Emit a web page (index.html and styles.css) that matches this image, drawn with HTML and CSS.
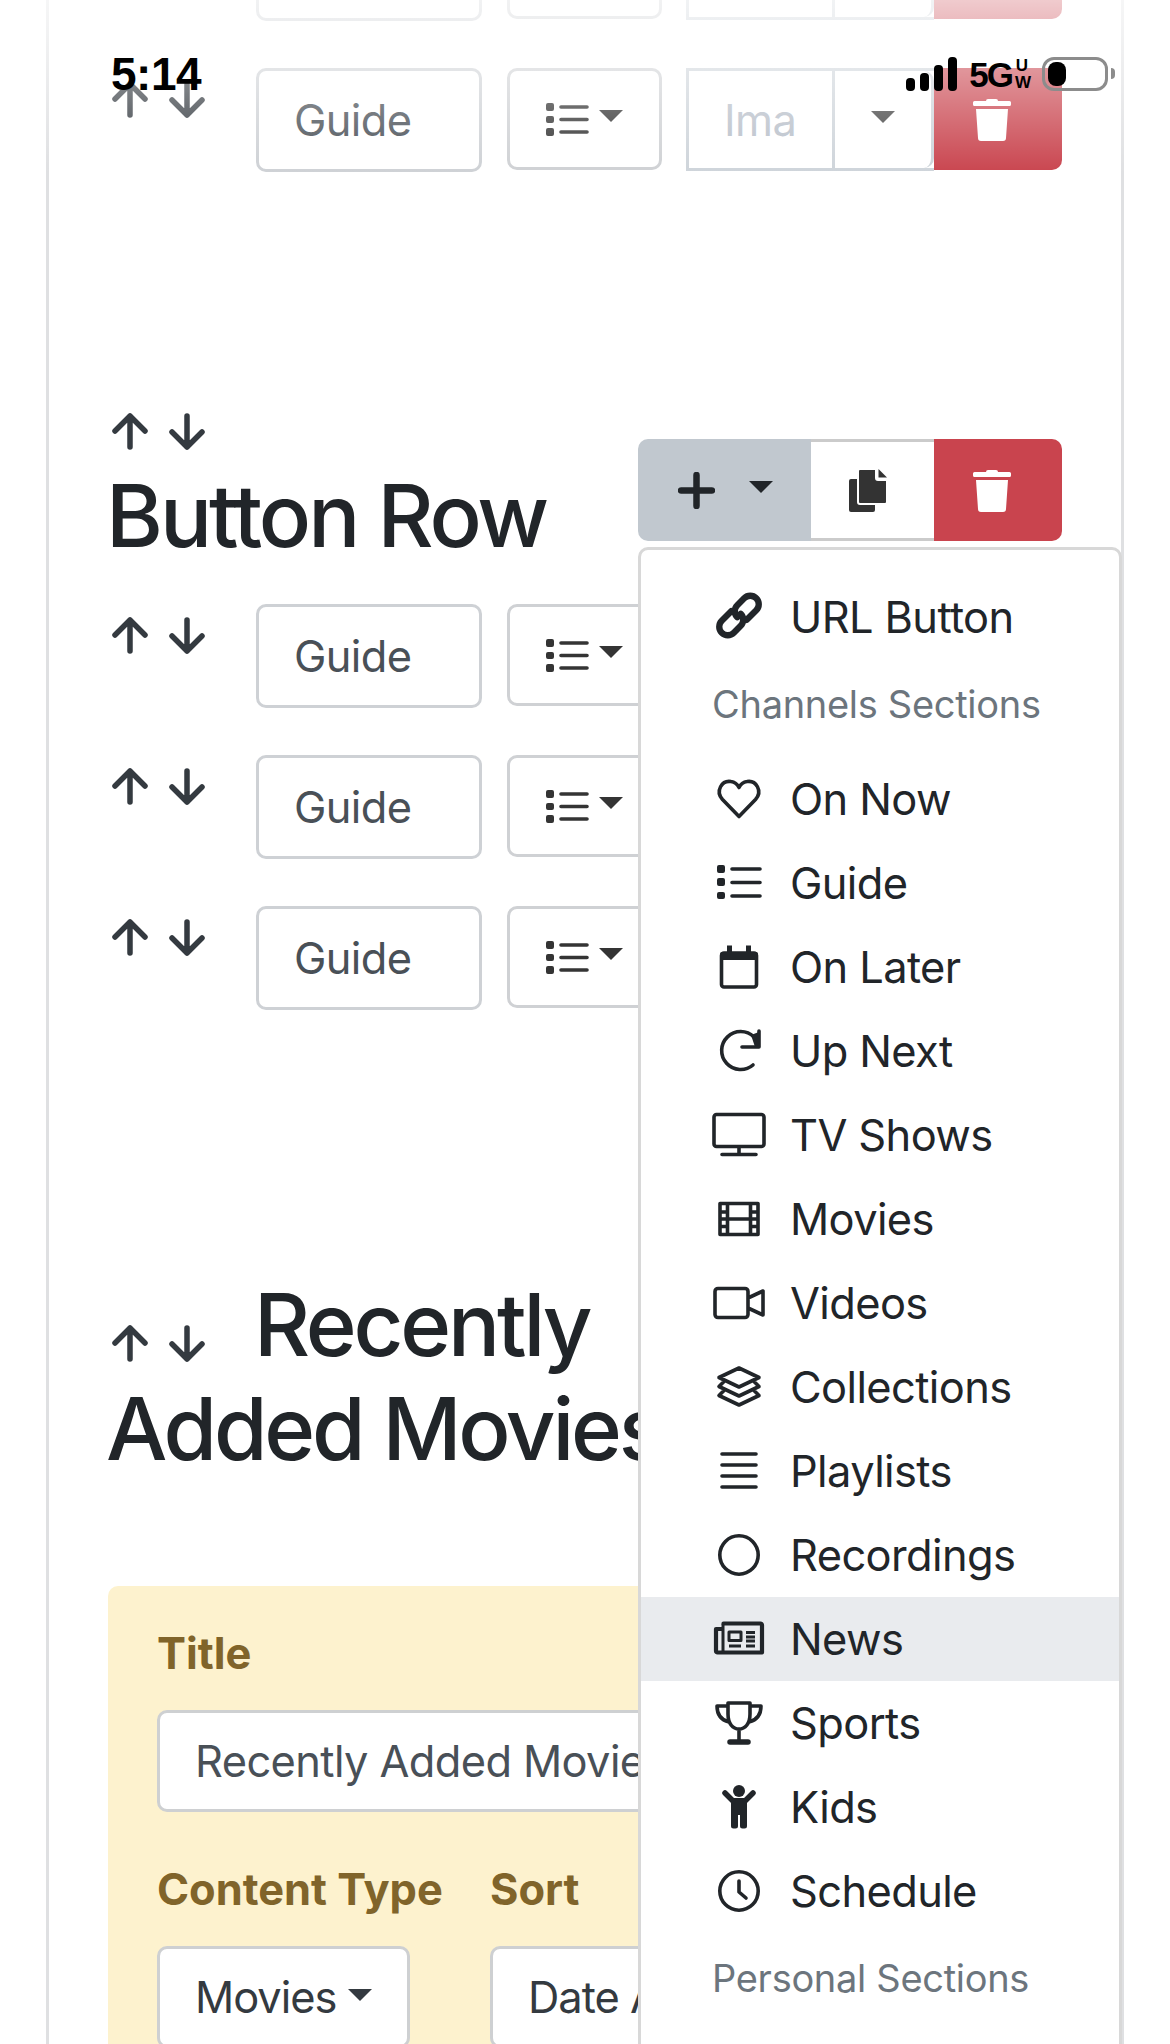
FILE: index.html
```html
<!DOCTYPE html>
<html lang="en">
<head>
    <meta charset="UTF-8">
    <meta name="viewport" content="width=device-width, initial-scale=1.0">
    <title>Sections</title>
    <link rel="stylesheet" href="styles.css">
</head>
<body>

<svg class="sprite" aria-hidden="true">
    <symbol id="i-up" viewBox="0 0 36 37"><path d="M18 34V3M3 18 18 3l15 15"/></symbol>
    <symbol id="i-down" viewBox="0 0 36 37"><path d="M18 3v31M3 19l15 15 15-15"/></symbol>
    <symbol id="i-trash" viewBox="0 0 38 43">
        <path class="solid" d="M13 3a2 2 0 0 1 2-2h8a2 2 0 0 1 2 2zM1.500 3h35A1.500 1.500 0 0 1 38 4.500v2A1.500 1.500 0 0 1 36.500 8h-35A1.500 1.500 0 0 1 0 6.500v-2A1.500 1.500 0 0 1 1.500 3zM3 11h32l-2 29a3 3 0 0 1-3 3H8a3 3 0 0 1-3-3z"/>
    </symbol>
    <symbol id="i-lines" viewBox="0 0 43 33">
        <path class="solid" d="M2 0h4a2 2 0 0 1 2 2v4a2 2 0 0 1-2 2H2a2 2 0 0 1-2-2V2a2 2 0 0 1 2-2zm0 13h4a2 2 0 0 1 2 2v3a2 2 0 0 1-2 2H2a2 2 0 0 1-2-2v-3a2 2 0 0 1 2-2zm0 12h4a2 2 0 0 1 2 2v4a2 2 0 0 1-2 2H2a2 2 0 0 1-2-2v-4a2 2 0 0 1 2-2z"/>
        <path class="thin" d="M15 4h26M15 16.500h26M15 29h26"/>
    </symbol>
    <symbol id="i-link" viewBox="0 0 54 54">
        <g transform="translate(27 25.500) rotate(-45) scale(1.22)">
            <path class="link" d="M-2-7h-11a7 7 0 0 0 0 14h8a7 7 0 0 0 7-7M2 7h11a7 7 0 0 0 0-14H5a7 7 0 0 0-7 7"/>
        </g>
    </symbol>
    <symbol id="i-heart" viewBox="0 0 54 54"><path d="M27 44.500 10.500 27.500C3 19 10 8 19 9.500c4 .5 6.500 3 8 6 1.500-3 4-5.500 8-6 9-1.500 16 9.500 8.500 18z"/></symbol>
    <symbol id="i-guide" viewBox="0 0 54 54">
        <path class="solid" d="M7 9h4a2 2 0 0 1 2 2v4a2 2 0 0 1-2 2H7a2 2 0 0 1-2-2v-4a2 2 0 0 1 2-2zm0 13h4a2 2 0 0 1 2 2v4a2 2 0 0 1-2 2H7a2 2 0 0 1-2-2v-4a2 2 0 0 1 2-2zm0 14h4a2 2 0 0 1 2 2v3a2 2 0 0 1-2 2H7a2 2 0 0 1-2-2v-3a2 2 0 0 1 2-2z"/>
        <path d="M20 13h28M20 26.500h28M20 40h28"/>
    </symbol>
    <symbol id="i-calendar" viewBox="0 0 54 54">
        <path d="M12 13h30a2.500 2.500 0 0 1 2.500 2.500v29A2.500 2.500 0 0 1 42 47H12a2.500 2.500 0 0 1-2.500-2.500v-29A2.500 2.500 0 0 1 12 13z"/>
        <path class="solid" d="M15 5.500h5V12h14V5.500h5V12h5a2 2 0 0 1 2 2v6H8v-6a2 2 0 0 1 2-2h5z"/>
    </symbol>
    <symbol id="i-redo" viewBox="0 0 54 54">
        <path d="M42 13A19 19 0 1 0 41 41M47 7v16H30"/>
        <path class="solid" d="M39 11l8-3v15h-4z"/>
    </symbol>
    <symbol id="i-tv" viewBox="0 0 54 54">
        <path d="M4.500 6.500h45a2.500 2.500 0 0 1 2.500 2.500v27a2.500 2.500 0 0 1-2.500 2.500h-45A2.500 2.500 0 0 1 2 36V9a2.500 2.500 0 0 1 2.500-2.500zM27 39v7M10 46.500h34"/>
    </symbol>
    <symbol id="i-film" viewBox="0 0 54 54">
        <path d="M8 11.500h38v31H8zM15.500 11.500v31M38.500 11.500v31M15.500 27h23M8 20h7.500M8 27h7.500M8 34.500h7.500M38.500 20H46M38.500 27H46M38.500 34.500H46"/>
    </symbol>
    <symbol id="i-video" viewBox="0 0 54 54">
        <path d="M6 12.500h27a3 3 0 0 1 3 3v23a3 3 0 0 1-3 3H6a3 3 0 0 1-3-3v-23a3 3 0 0 1 3-3zM36 22l15-7v24l-15-7z"/>
    </symbol>
    <symbol id="i-layers" viewBox="0 0 54 54">
        <path d="M27 8l20 9.500L27 27 7 17.500zM12 21.500l-5 5L27 36l20-9.500-5-5M12 30.500l-5 5L27 45l20-9.500-5-5"/>
    </symbol>
    <symbol id="i-rows" viewBox="0 0 54 54"><path class="thin" d="M10 10h34M10 21h34M10 32h34M10 43h34"/></symbol>
    <symbol id="i-circle" viewBox="0 0 54 54"><circle cx="27" cy="27" r="19.200"/></symbol>
    <symbol id="i-news" viewBox="0 0 54 54">
        <path class="bold" d="M11.500 11.500h37a1.500 1.500 0 0 1 1.500 1.500v27.500H5.500a1.500 1.500 0 0 1-1.500-1.500V17h6"/>
        <path class="mid" d="M11 12v28M17 20h12v8.500H17zM34 20.500h9M34 25h9M34 29h9M17 34h12M34 34h9"/>
    </symbol>
    <symbol id="i-trophy" viewBox="0 0 54 54">
        <path d="M16 7h22v11c0 10-5 15-11 15s-11-5-11-15zM16 10H5c0 9 4 14 12 16M38 10h11c0 9-4 14-12 16M27 33v12"/>
        <path class="thick" d="M18 46h18"/>
    </symbol>
    <symbol id="i-kid" viewBox="0 0 54 54">
        <circle class="solid" cx="27" cy="11" r="6"/>
        <path class="solid" d="M21 18h12a2 2 0 0 1 2 2v26a2.500 2.500 0 0 1-2.500 2.500h-2A2.500 2.500 0 0 1 28 46V35h-2v11a2.500 2.500 0 0 1-2.500 2.500h-2A2.500 2.500 0 0 1 19 46V20a2 2 0 0 1 2-2z"/>
        <path class="thick" d="M13 13l8 8M41 13l-8 8"/>
    </symbol>
    <symbol id="i-clock" viewBox="0 0 54 54"><circle cx="27" cy="27" r="19.200"/><path d="M27 17v11l7 6"/></symbol>
</svg>

<div class="page">

    <!-- scrolled almost out of view, only the bottom edges show -->
    <div class="row">
        <div class="arrows"></div>
        <div class="guide-btn"></div>
        <div class="list-btn"></div>
        <div class="image-field"><span class="image-text"></span><span class="image-caret"></span></div>
        <div class="trash-btn"></div>
    </div>

    <div class="row">
        <div class="arrows"><svg class="arrow"><use href="#i-up"/></svg><svg class="arrow"><use href="#i-down"/></svg></div>
        <div class="guide-btn">Guide</div>
        <div class="list-btn"><svg class="list-icon"><use href="#i-lines"/></svg><span class="caret"></span></div>
        <div class="image-field"><span class="image-text">Ima</span><span class="image-caret"><span class="caret"></span></span></div>
        <div class="trash-btn"><svg class="trash-icon"><use href="#i-trash"/></svg></div>
    </div>

    <div class="section-head">
        <div class="section-title">
            <div class="arrows title-arrows"><svg class="arrow"><use href="#i-up"/></svg><svg class="arrow"><use href="#i-down"/></svg></div>
            <h2>Button Row</h2>
        </div>
        <div class="add-group">
            <div class="add-btn">
                <svg class="plus-icon" viewBox="0 0 37 37"><path d="M18.500 3v31M3 18.500h31"/></svg>
                <span class="caret"></span>
            </div>
            <div class="copy-btn">
                <svg class="copy-icon" viewBox="0 0 38 43">
                    <path d="M2 10h24v31a2 2 0 0 1-2 2H2a2 2 0 0 1-2-2V12a2 2 0 0 1 2-2z" fill="#333"/>
                    <path d="M11 0h16v9a2 2 0 0 0 2 2h9v22a2 2 0 0 1-2 2H11a2 2 0 0 1-2-2V2a2 2 0 0 1 2-2z" fill="#333" stroke="#fff" stroke-width="2"/>
                    <path d="M29.500 0 38 8.500h-8.500z" fill="#333"/>
                </svg>
            </div>
            <div class="trash-btn"><svg class="trash-icon"><use href="#i-trash"/></svg></div>

            <div class="menu">
                <div class="menu-item"><svg class="menu-icon"><use href="#i-link"/></svg>URL Button</div>
                <div class="menu-header">Channels Sections</div>
                <div class="menu-item"><svg class="menu-icon"><use href="#i-heart"/></svg>On Now</div>
                <div class="menu-item"><svg class="menu-icon"><use href="#i-guide"/></svg>Guide</div>
                <div class="menu-item"><svg class="menu-icon"><use href="#i-calendar"/></svg>On Later</div>
                <div class="menu-item"><svg class="menu-icon"><use href="#i-redo"/></svg>Up Next</div>
                <div class="menu-item"><svg class="menu-icon"><use href="#i-tv"/></svg>TV Shows</div>
                <div class="menu-item"><svg class="menu-icon"><use href="#i-film"/></svg>Movies</div>
                <div class="menu-item"><svg class="menu-icon"><use href="#i-video"/></svg>Videos</div>
                <div class="menu-item"><svg class="menu-icon"><use href="#i-layers"/></svg>Collections</div>
                <div class="menu-item"><svg class="menu-icon"><use href="#i-rows"/></svg>Playlists</div>
                <div class="menu-item"><svg class="menu-icon"><use href="#i-circle"/></svg>Recordings</div>
                <div class="menu-item active"><svg class="menu-icon"><use href="#i-news"/></svg>News</div>
                <div class="menu-item"><svg class="menu-icon"><use href="#i-trophy"/></svg>Sports</div>
                <div class="menu-item"><svg class="menu-icon"><use href="#i-kid"/></svg>Kids</div>
                <div class="menu-item"><svg class="menu-icon"><use href="#i-clock"/></svg>Schedule</div>
                <div class="menu-header">Personal Sections</div>
            </div>
        </div>
    </div>

    <div class="row">
        <div class="arrows"><svg class="arrow"><use href="#i-up"/></svg><svg class="arrow"><use href="#i-down"/></svg></div>
        <div class="guide-btn">Guide</div>
        <div class="list-btn"><svg class="list-icon"><use href="#i-lines"/></svg><span class="caret"></span></div>
    </div>

    <div class="row">
        <div class="arrows"><svg class="arrow"><use href="#i-up"/></svg><svg class="arrow"><use href="#i-down"/></svg></div>
        <div class="guide-btn">Guide</div>
        <div class="list-btn"><svg class="list-icon"><use href="#i-lines"/></svg><span class="caret"></span></div>
    </div>

    <div class="row">
        <div class="arrows"><svg class="arrow"><use href="#i-up"/></svg><svg class="arrow"><use href="#i-down"/></svg></div>
        <div class="guide-btn">Guide</div>
        <div class="list-btn"><svg class="list-icon"><use href="#i-lines"/></svg><span class="caret"></span></div>
    </div>

    <h2 class="wrap-title"><span class="arrows inline-arrows"><svg class="arrow"><use href="#i-up"/></svg><svg class="arrow"><use href="#i-down"/></svg></span>Recently<br>Added Movies</h2>

    <div class="panel">
        <label class="panel-label">Title</label>
        <div class="panel-input">Recently Added Movies</div>
        <div class="panel-cols">
            <div class="panel-col">
                <label class="panel-label">Content Type</label>
                <div class="select-btn">Movies<span class="caret"></span></div>
            </div>
            <div class="panel-col sort-col">
                <label class="panel-label">Sort</label>
                <div class="select-btn">Date Added<span class="caret"></span></div>
            </div>
        </div>
    </div>

</div>

<!-- phone status bar, over the page -->
<div class="status-fade"></div>
<div class="status-bar">
    <span class="status-time">5:14</span>
    <div class="status-right">
        <div class="signal"><span class="bar-1"></span><span class="bar-2"></span><span class="bar-3"></span><span class="bar-4"></span></div>
        <span class="net">5G</span>
        <span class="net-small">U<br>W</span>
        <div class="battery"><span class="battery-level"></span></div>
        <span class="battery-cap"></span>
    </div>
</div>

</body>
</html>
```

FILE: styles.css
```css
html, body {
    margin: 0;
    height: 2044px;
    overflow: hidden;
    background: #fff;
}

body {
    position: relative;
    font-family: Inter, "Noto Sans", sans-serif;
    font-size: 43.4px;
    line-height: 65px;
    color: #212529;
}

.sprite {
    position: absolute;
    width: 0;
    height: 0;
}

/* icon strokes, inherited into the <use> copies */
.sprite path, .sprite circle {
    fill: none;
    stroke: currentColor;
    stroke-width: 3.6;
    stroke-linecap: round;
    stroke-linejoin: round;
}

.sprite .solid {
    fill: currentColor;
    stroke: none;
}

.sprite .thin {
    stroke-width: 3.6;
}

.sprite .mid {
    stroke-width: 3;
    stroke-linecap: butt;
}

.sprite .bold {
    stroke-width: 4.2;
}

.sprite .thick {
    stroke-width: 5.5;
}

.sprite .link {
    stroke-width: 5.2;
}

.page {
    margin: -83px 46px 0;
    padding: 0 59px;
    min-height: 2300px;
    border-left: 3px solid #dfe0e2;
    border-right: 3px solid #dfe0e2;
}

.row {
    display: flex;
    height: 103px;
    margin-bottom: 48px;
}

.arrows {
    display: flex;
    gap: 21px;
    width: 148px;
    padding: 13px 0 0 4px;
    box-sizing: border-box;
    flex-shrink: 0;
}

.arrow {
    width: 36px;
    height: 37px;
    color: #343a40;
}

.sprite #i-up path, .sprite #i-down path {
    stroke-width: 5.5;
}

.guide-btn {
    width: 226px;
    height: 104px;
    box-sizing: border-box;
    padding-left: 35px;
    border: 3px solid #ced1d5;
    border-radius: 10px;
    line-height: 99px;
    color: #495057;
    letter-spacing: -0.6px;
    flex-shrink: 0;
}

.list-btn {
    display: flex;
    align-items: center;
    width: 155px;
    height: 102px;
    box-sizing: border-box;
    margin-left: 25px;
    padding-left: 36px;
    border: 3px solid #cfd1d4;
    border-radius: 10px;
    color: #343434;
    flex-shrink: 0;
}

.list-icon {
    width: 43px;
    height: 33px;
    margin-right: 10px;
}

.caret {
    display: inline-block;
    width: 0;
    height: 0;
    border-top: 12px solid currentColor;
    border-left: 12px solid transparent;
    border-right: 12px solid transparent;
    margin-top: -6px;
}

.image-field {
    display: flex;
    width: 248px;
    height: 103px;
    box-sizing: border-box;
    margin-left: 24px;
    border: 3px solid #ced4da;
    border-right: none;
    flex-shrink: 0;
}

.image-text {
    width: 146px;
    box-sizing: border-box;
    padding-left: 35px;
    line-height: 98px;
    color: #b9c0ca;
    letter-spacing: -0.6px;
    border-right: 3px solid #ced4da;
}

.image-caret {
    display: flex;
    align-items: center;
    justify-content: center;
    flex: 1;
    color: #444;
    border-right: 3px solid #ced4da;
    border-radius: 0 10px 10px 0;
}

.trash-btn {
    display: flex;
    align-items: center;
    justify-content: center;
    width: 128px;
    height: 102px;
    padding-right: 13px;
    box-sizing: border-box;
    background: #c9444e;
    border-radius: 0 10px 10px 0;
    flex-shrink: 0;
}

.trash-icon {
    width: 38px;
    height: 43px;
    color: #fff;
}

.section-head {
    display: flex;
    justify-content: space-between;
    margin: 242px 0 37px;
}

.title-arrows {
    padding-top: 0;
    margin-bottom: 14px;
}

h2 {
    margin: 0 0 0 -2px;
    font-size: 86.7px;
    line-height: 104px;
    font-weight: 500;
    letter-spacing: -3px;
}

.section-title h2 {
    margin-bottom: -1px;
}

.add-group {
    position: relative;
    display: flex;
    align-self: flex-start;
    width: 424px;
    margin-top: 26px;
}

.add-btn {
    display: flex;
    align-items: center;
    width: 173px;
    height: 102px;
    box-sizing: border-box;
    padding-left: 40px;
    background: #c1c8cf;
    border-radius: 10px 0 0 10px;
}

.plus-icon {
    width: 37px;
    height: 37px;
    margin-right: 34px;
}

.plus-icon path {
    fill: none;
    stroke: #212529;
    stroke-width: 6.5;
    stroke-linecap: round;
}

.copy-btn {
    display: flex;
    align-items: center;
    justify-content: center;
    width: 123px;
    height: 102px;
    box-sizing: border-box;
    padding-right: 9px;
    border-top: 3px solid #cbcbcb;
    border-bottom: 3px solid #cbcbcb;
}

.copy-icon {
    width: 38px;
    height: 43px;
}

.menu {
    position: absolute;
    top: 108px;
    left: 0;
    width: 484px;
    box-sizing: border-box;
    padding: 25px 0;
    background: #fff;
    border: 3px solid #d8d8d8;
    border-radius: 10px;
}

.menu-item {
    display: flex;
    align-items: center;
    height: 84px;
    padding-left: 71px;
    letter-spacing: -0.6px;
}

.menu-item.active {
    background: #e9ebee;
}

.menu-icon {
    width: 54px;
    height: 54px;
    margin-right: 24px;
    color: #212529;
    flex-shrink: 0;
}

.menu-header {
    height: 98px;
    box-sizing: border-box;
    padding: 15px 0 0 71px;
    font-size: 38px;
    line-height: 60px;
    color: #6c757d;
    letter-spacing: -0.3px;
}

/* the menu lies over this title from x=638, so it stops there */
.wrap-title {
    width: 532px;
    margin: 264px 0 105px -2px;
    letter-spacing: -3.2px;
    white-space: nowrap;
    overflow: hidden;
}

.inline-arrows {
    display: inline-flex;
    padding: 0 0 0 6px;
    vertical-align: -6px;
}

.panel {
    padding: 35px 49px 60px;
    background: #fdf2ce;
    border-radius: 10px;
}

.panel-label {
    display: block;
    margin-bottom: 24px;
    font-weight: 700;
    color: #80642a;
}

.panel-input {
    height: 102px;
    box-sizing: border-box;
    margin-bottom: 45px;
    padding-left: 35px;
    background: #fff;
    border: 3px solid #ced0d2;
    border-radius: 10px;
    line-height: 96px;
    color: #495057;
    letter-spacing: -0.6px;
    white-space: nowrap;
    overflow: hidden;
}

.panel-cols {
    display: flex;
}

.panel-col {
    width: 333px;
}

.sort-col {
    width: 148px;
    overflow: hidden;
}

.select-btn {
    display: inline-block;
    height: 102px;
    box-sizing: border-box;
    padding: 0 35px;
    background: #fff;
    border: 3px solid #ced0d2;
    border-radius: 10px;
    line-height: 96px;
    color: #343a40;
    letter-spacing: -1px;
    white-space: nowrap;
}

.select-btn .caret {
    margin-left: 12px;
    vertical-align: 12px;
}

.status-fade {
    position: absolute;
    top: 0;
    left: 0;
    right: 0;
    height: 175px;
    background: linear-gradient(rgba(255, 255, 255, 0.72), rgba(255, 255, 255, 0));
}

.status-bar {
    position: absolute;
    top: 57px;
    left: 111px;
    right: 55px;
    display: flex;
    justify-content: space-between;
    color: #000;
    font-family: "Liberation Sans", Arial, sans-serif;
}

.status-time {
    font-size: 46px;
    line-height: 34px;
    font-weight: 700;
    letter-spacing: -0.5px;
}

.status-right {
    display: flex;
    align-items: flex-start;
}

.signal {
    display: flex;
    align-items: flex-end;
    gap: 5px;
    height: 34px;
    margin-right: 12px;
}

.signal span {
    width: 9px;
    background: #000;
    border-radius: 4px;
}

.bar-1 { height: 13px; }
.bar-2 { height: 18px; }
.bar-3 { height: 26px; }
.bar-4 { height: 34px; }

.net {
    margin-top: 5px;
    font-size: 35px;
    line-height: 26px;
    font-weight: 700;
    letter-spacing: -2px;
}

.net-small {
    width: 14px;
    margin: 0 13px 0 3px;
    font-size: 17px;
    line-height: 17px;
    text-align: center;
    font-weight: 700;
}

.battery {
    width: 66px;
    height: 34px;
    box-sizing: border-box;
    padding: 2px 3px;
    border: 3px solid #8c8c8c;
    border-radius: 12px;
}

.battery-level {
    display: block;
    width: 18px;
    height: 24px;
    background: #000;
    border-radius: 8px;
}

.battery-cap {
    width: 4px;
    height: 11px;
    margin: 11px 0 0 3px;
    background: #8c8c8c;
    border-radius: 0 4px 4px 0;
}
```
